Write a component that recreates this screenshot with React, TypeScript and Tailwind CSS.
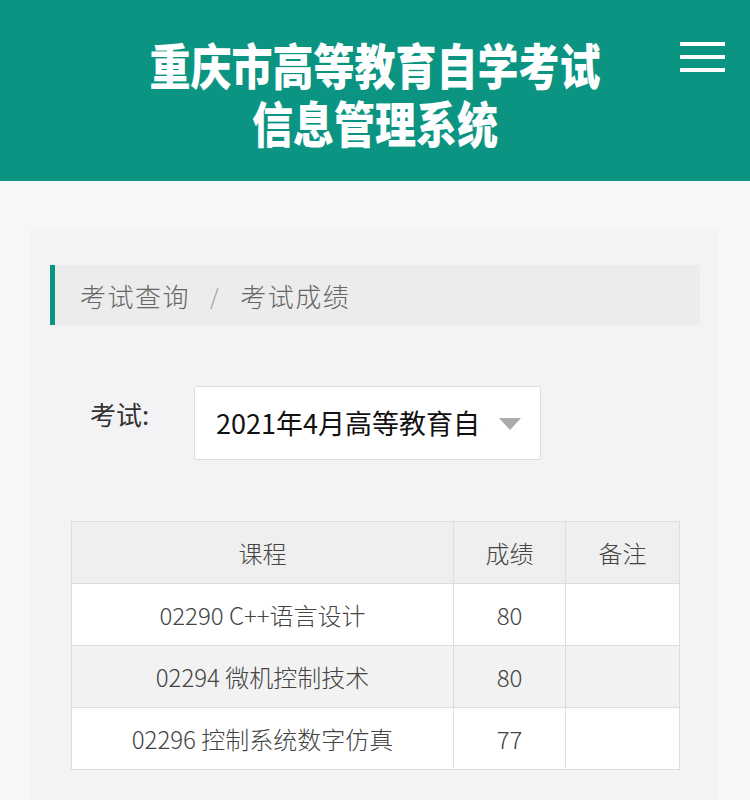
import React from "react";

const rows = [
  { course: "02290 C++语言设计", score: "80", stripe: false },
  { course: "02294 微机控制技术", score: "80", stripe: true },
  { course: "02296 控制系统数字仿真", score: "77", stripe: false },
];

const font = { fontFamily: '"Noto Sans CJK SC", "Liberation Sans", sans-serif' };

export default function App() {
  return (
    <div className="w-[750px] min-h-[800px] bg-[#f7f7f9]" style={font}>
      <header className="relative h-[181px] bg-[#0b9482] flex flex-col items-center justify-center">
        <div className="flex flex-col items-center text-white font-black text-[41px] leading-[48px] scale-y-[1.2] pt-[2px]">
          <span>重庆市高等教育自学考试</span>
          <span>信息管理系统</span>
        </div>
        <button className="absolute right-[25px] top-[42px] flex flex-col gap-[9px]">
          <span className="block w-[45px] h-[4px] bg-white" />
          <span className="block w-[45px] h-[4px] bg-white" />
          <span className="block w-[45px] h-[4px] bg-white" />
        </button>
      </header>

      <main className="pt-[47px] pl-[30px] pr-[32px]">
        <section className="bg-[#f3f3f5] pt-[37px] pl-[20px] pr-[18px] pb-[30px]">
          <div className="flex items-center h-[60px] bg-[#ececec] border-l-[5px] border-[#0b9482] pl-[25px] text-[26px] tracking-[1.5px] font-light text-[#666]">
            <span>考试查询</span>
            <span className="mx-[20px] text-[#999] text-[22px]">/</span>
            <span>考试成绩</span>
          </div>

          <div className="flex items-center mt-[61px] pl-[40px]">
            <span className="text-[26px] text-[#333] w-[104px] -mt-[20px]">考试:</span>
            <div className="relative w-[347px] h-[74px] bg-white border border-[#dcdcdc] rounded-[3px] flex items-center pl-[21px]">
              <span className="block w-[265px] overflow-hidden whitespace-nowrap text-[27px] text-[#111]">
                2021年4月高等教育自学考试
              </span>
              <svg className="absolute right-[19px] top-[31px]" width="22" height="12" viewBox="0 0 22 12">
                <path d="M0 0 L22 0 L11 12 Z" fill="#aaa" />
              </svg>
            </div>
          </div>

          <table className="mt-[61px] ml-[21px] w-[609px] border-collapse text-[24px] font-light text-[#444] bg-white">
            <thead>
              <tr className="h-[62px] bg-[#efefef]">
                <th className="font-light border border-[#dddddd] w-[382px]">课程</th>
                <th className="font-light border border-[#dddddd] w-[112px]">成绩</th>
                <th className="font-light border border-[#dddddd]">备注</th>
              </tr>
            </thead>
            <tbody>
              {rows.map((r) => (
                <tr key={r.course} className={r.stripe ? "h-[62px] bg-[#f2f2f2]" : "h-[62px] bg-white"}>
                  <td className="border border-[#dddddd] text-center">{r.course}</td>
                  <td className="border border-[#dddddd] text-center">{r.score}</td>
                  <td className="border border-[#dddddd]" />
                </tr>
              ))}
            </tbody>
          </table>
        </section>
      </main>
    </div>
  );
}
